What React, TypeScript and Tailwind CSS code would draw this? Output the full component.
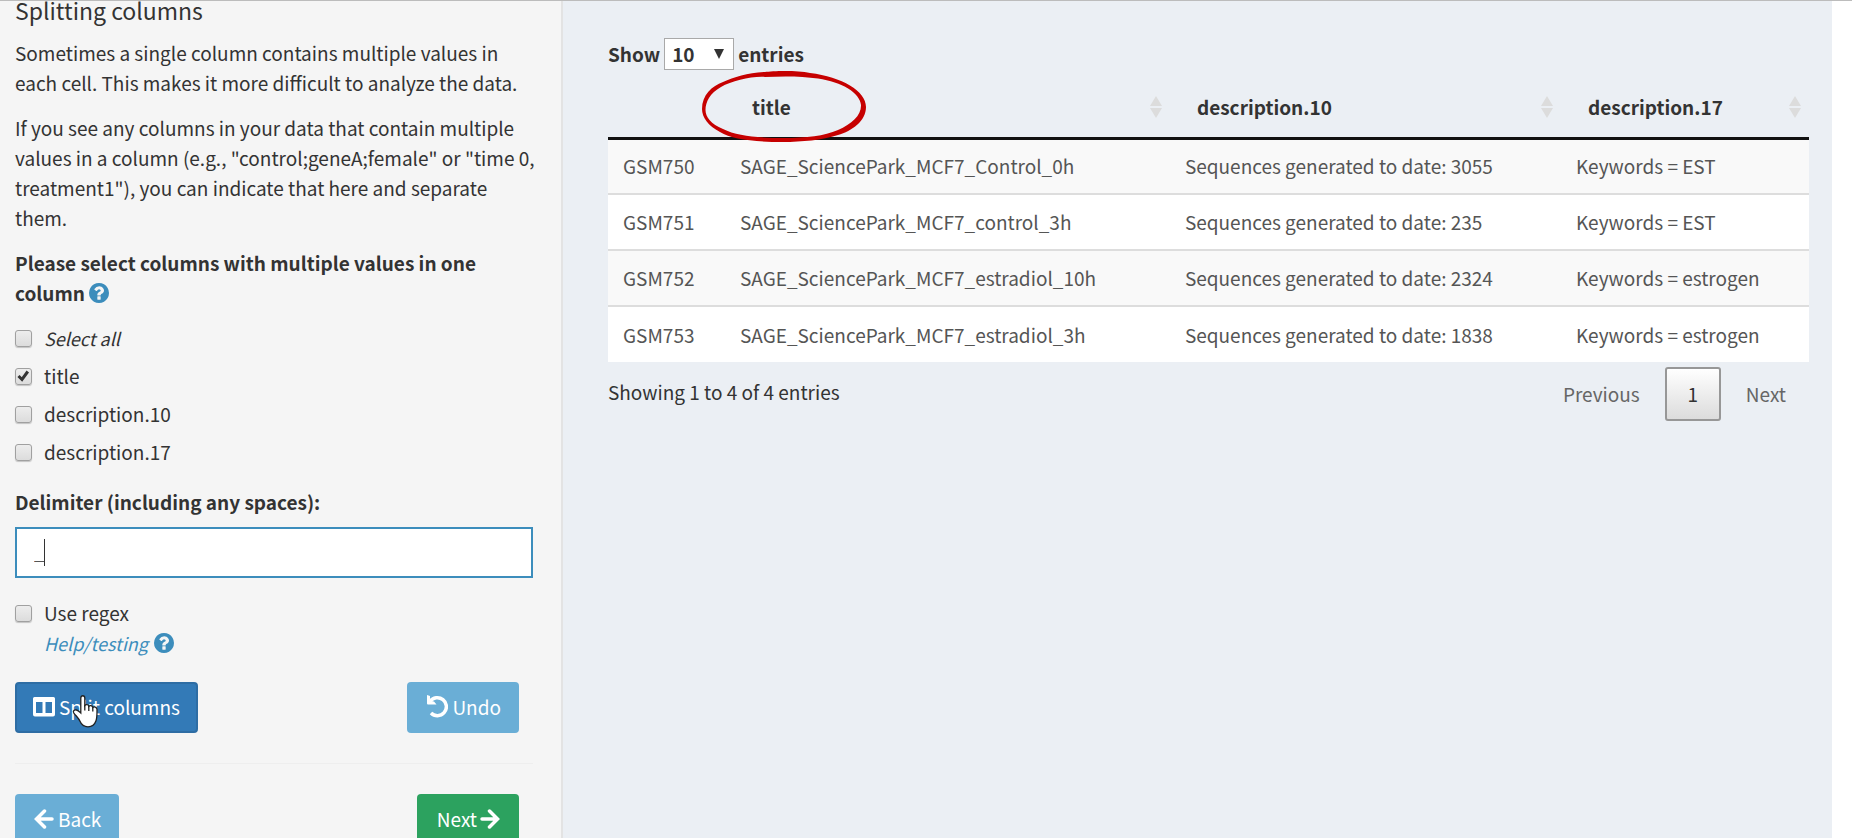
import React, { useState } from "react";

const rows = [
  ["GSM750", "SAGE_SciencePark_MCF7_Control_0h", "Sequences generated to date: 3055", "Keywords = EST"],
  ["GSM751", "SAGE_SciencePark_MCF7_control_3h", "Sequences generated to date: 235", "Keywords = EST"],
  ["GSM752", "SAGE_SciencePark_MCF7_estradiol_10h", "Sequences generated to date: 2324", "Keywords = estrogen"],
  ["GSM753", "SAGE_SciencePark_MCF7_estradiol_3h", "Sequences generated to date: 1838", "Keywords = estrogen"],
];

function HelpIcon() {
  return (
    <svg viewBox="0 0 1536 1536" className="inline-block h-5 w-5 align-[-2px]" fill="#3c8dbc" aria-hidden="true">
      <path d="M896 1248v-192q0-14-9-23t-23-9H672q-14 0-23 9t-9 23v192q0 14 9 23t23 9h192q14 0 23-9t9-23zm256-672q0-88-55.500-163T958 297t-170-41q-243 0-371 213-15 24 8 42l132 100q7 6 19 6 16 0 25-12 53-68 86-92 34-24 86-24 48 0 85.500 26t37.500 59q0 38-20 61t-68 45q-63 28-115.500 86.500T640 892v36q0 14 9 23t23 9h192q14 0 23-9t9-23q0-19 21.500-49.500T972 829q32-18 49-28.500t46-35 44.500-48 28-60.500 12.500-81zm384 192q0 209-103 385.500T1153.500 1433 768 1536t-385.500-103T103 1153.500 0 768t103-385.500T382.500 103 768 0t385.500 103T1433 382.500 1536 768z" />
    </svg>
  );
}

function SortIcon() {
  return (
    <svg viewBox="0 0 12 22" className="h-[22px] w-3 shrink-0" fill="#dcdcdc" aria-hidden="true">
      <path d="M6 0 12 10H0zM0 12h12L6 22z" />
    </svg>
  );
}

function Check({ label, italic, initial }: { label: string; italic?: boolean; initial?: boolean }) {
  const [on, setOn] = useState(!!initial);
  return (
    <label className="flex items-center gap-3">
      <span className="relative h-[17px] w-[17px]">
        <input
          type="checkbox"
          checked={on}
          onChange={() => setOn(!on)}
          className="block h-[17px] w-[17px] appearance-none rounded-[3px] border border-[#a0a0a0] bg-linear-to-b from-[#ededed] to-[#dcdcdc] shadow-[0_1px_1px_rgba(0,0,0,0.2)]"
        />
        {on && (
          <svg viewBox="0 0 17 17" className="pointer-events-none absolute inset-0" fill="none" stroke="#333" strokeWidth="3">
            <path d="M3.500 8 7 11.500 12.800 3.500" />
          </svg>
        )}
      </span>
      <span className={italic ? "text-lg leading-[30px] italic" : ""}>{label}</span>
    </label>
  );
}

export default function App() {
  const [delimiter, setDelimiter] = useState("_");
  return (
    <div className="h-screen overflow-hidden border-t border-[#bcbcbc] bg-white pr-5 font-['Noto_Sans_CJK_SC',sans-serif] text-[19px] leading-[30px] text-[#333]">
      <div className="flex h-full">
        <aside className="w-[563px] shrink-0 border-r-2 border-[#e3e3e3] bg-[#f5f5f5] pr-7 pl-[15px]">
          <h3 className="-mt-1.5 mb-[13px] text-[23px] leading-[30px]">Splitting columns</h3>
          <div className="-mr-1">
            <p className="mb-[15px]">
              Sometimes a single column contains multiple values in each cell. This makes it more difficult to analyze the data.
            </p>
            <p className="mb-[15px]">
              If you see any columns in your data that contain multiple values in a column (e.g., "control;geneA;female" or "time 0, treatment1"), you can
              indicate that here and separate them.
            </p>
          </div>
          <fieldset>
            <legend className="mb-[15px] font-bold">
              Please select columns with multiple values in one column <HelpIcon />
            </legend>
            <div className="flex flex-col gap-2">
              <Check label="Select all" italic />
              <Check label="title" initial />
              <Check label="description.10" />
              <Check label="description.17" />
            </div>
          </fieldset>
          <label htmlFor="delimiter" className="mt-5 mb-2.5 block font-bold">
            Delimiter (including any spaces):
          </label>
          <div className="relative">
            <input
              id="delimiter"
              value={delimiter}
              onChange={(e) => setDelimiter(e.target.value)}
              className="block h-[51px] w-full border-2 border-[#3c8dbc] bg-white px-[17px] pb-1 text-[#555] outline-none"
            />
            <span className="pointer-events-none absolute top-3 left-[29px] h-[27px] w-px bg-[#333]" />
          </div>
          <div className="mt-5">
            <Check label="Use regex" />
            <a href="#help" className="ml-[29px] flex items-center gap-1.5 text-[#3c8dbc]">
              <i className="text-lg leading-[30px]">Help/testing</i>
              <HelpIcon />
            </a>
          </div>
          <div className="mt-6 flex justify-between pr-3.5 text-white">
            <button className="relative flex h-[51px] items-center gap-1 rounded-[4px] border-2 border-[#2e6da4] bg-[#337ab7] px-4 pb-0.5">
              <svg viewBox="0 0 22 20" className="h-5 w-[22px]" fill="#fff" fillRule="evenodd" aria-hidden="true">
                <path d="M1.500 0h19a1.500 1.500 0 0 1 1.500 1.500v16a2 2 0 0 1-2 2H2a2 2 0 0 1-2-2v-16A1.500 1.500 0 0 1 1.500 0zM3 5v11h6.500V5zM12.500 5v11H19V5z" />
              </svg>
              Split columns
              <svg viewBox="0 0 26 33" className="pointer-events-none absolute top-[11px] left-[55px] h-[33px] w-[26px]" aria-hidden="true">
                <path
                  d="M8.800 3c0-3 4-3 4 0v7.500c1-1.500 3.800-1.200 4 .8 1-1.300 3.600-.8 4 1.200 1.200-1.200 4-.5 4.200 1.800 0 4 .2 8-1 11.500-1.200 3.500-4 6-8 6-4.500 0-6.500-1.800-8-5.500-1.200-3-4-5.300-6.300-8.500-1-1.800.5-3.300 2.800-2.800 1.800.5 3 1.800 4.300 3z"
                  fill="#fff"
                  stroke="#222"
                  strokeWidth="1.300"
                />
                <path d="M12.800 10v5.500M16.800 11v5M20.800 12.500v4" stroke="#222" strokeWidth="1.300" />
              </svg>
            </button>
            <button className="flex h-[51px] items-center gap-1 rounded-[4px] bg-[#6aaed6] pr-[18px] pl-[19px] pb-0.5">
              <svg viewBox="0 0 22 23" className="h-[23px] w-[22px]" aria-hidden="true">
                <path d="M4 6.500A9 9 0 1 1 5 18" fill="none" stroke="#fff" strokeWidth="3.500" />
                <path d="M1 0v8.500a1 1 0 0 0 1 1h8.500L8 6.500 4 6V1z" fill="#fff" />
              </svg>
              Undo
            </button>
          </div>
          <hr className="my-[30px] border-[#eee]" />
          <div className="flex justify-between pr-3.5 text-white">
            <button className="flex h-[51px] items-center gap-1 rounded-[4px] bg-[#6aaed6] pr-[18px] pl-[19px] pb-0.5">
              <svg viewBox="0 0 20 20" className="h-5 w-5" fill="none" stroke="#fff" strokeWidth="3.500" strokeLinecap="round" aria-hidden="true">
                <path d="M18 10H3M10.500 2 2.500 10l8 8" />
              </svg>
              Back
            </button>
            <button className="flex h-[51px] items-center gap-[3px] rounded-[4px] bg-[#2ca25f] pr-[19px] pl-5 pb-0.5">
              Next
              <svg viewBox="0 0 20 20" className="h-5 w-5" fill="none" stroke="#fff" strokeWidth="3.500" strokeLinecap="round" aria-hidden="true">
                <path d="M2 10h15M9.500 2l8 8-8 8" />
              </svg>
            </button>
          </div>
        </aside>
        <main className="min-w-0 flex-1 bg-[#ebeff4] pt-[37px] pr-[23px] pl-[45px]">
          <div className="flex h-8 items-center gap-1 font-bold">
            <label htmlFor="length">Show</label>
            <span className="relative">
              <select id="length" className="block h-8 w-[70px] appearance-none border border-[#a9a9a9] bg-white pl-[7px]">
                <option>10</option>
              </select>
              <svg viewBox="0 0 10 10" className="pointer-events-none absolute top-[11px] right-2.5 h-2.5 w-2.5" fill="#333">
                <path d="M0 0h10L5 10z" />
              </svg>
            </span>
            <span>entries</span>
          </div>
          <div className="relative">
            <table className="w-full table-fixed border-collapse">
              <colgroup>
                <col className="w-[9.740%]" />
                <col className="w-[37.050%]" />
                <col className="w-[32.560%]" />
                <col />
              </colgroup>
              <thead>
                <tr className="h-[68px] border-b-[3px] border-[#111] text-left">
                  <th />
                  {["title", "description.10", "description.17"].map((h) => (
                    <th key={h} className="pt-2 pr-2 pl-[27px] font-bold">
                      <div className="flex items-center justify-between">
                        {h}
                        <SortIcon />
                      </div>
                    </th>
                  ))}
                </tr>
              </thead>
              <tbody className="text-[#555]">
                {rows.map((r) => (
                  <tr key={r[0]} className="h-14 border-t-2 border-[#ddd] odd:bg-[#f9f9f9] even:bg-white first:border-t-0">
                    {r.map((c, i) => (
                      <td key={i} className="px-[15px] whitespace-nowrap">
                        {c}
                      </td>
                    ))}
                  </tr>
                ))}
              </tbody>
            </table>
            <svg viewBox="0 0 164 72" className="pointer-events-none absolute top-px left-[94px] h-[72px] w-[164px]" fill="#c60000" fillRule="evenodd" aria-hidden="true">
              <path d="M63 1C70 0 95-1 108 2 140 6 164 20 164 36 164 50 150 60 136 64 120 69 100 71 81 71 50 71 30 68 18 61 6 55 0 46 0 38 0 24 10 15 21 11 32 6 46 2 63 1zM63 6C50 5 30 10 19 16 8 22 3.500 31 3.500 39 3.500 46 9 53 21 58 35 65 55 67 81 67 105 67 122 65 136 59 150 53 159.500 44 159 34 158 22 140 11 116 7.500 100 5 80 5 63 6z" />
            </svg>
          </div>
          <div className="flex items-start justify-between pt-[5px]">
            <p className="pt-2.5">Showing 1 to 4 of 4 entries</p>
            <nav className="flex items-center gap-1 pr-0.5" aria-label="Pages">
              <button className="px-[21px] text-[#666]">Previous</button>
              <button className="h-[54px] w-14 rounded-[3px] border-2 border-[#979797] bg-linear-to-b from-white to-[#dcdcdc]">1</button>
              <button className="px-[21px] text-[#666]">Next</button>
            </nav>
          </div>
        </main>
      </div>
    </div>
  );
}
